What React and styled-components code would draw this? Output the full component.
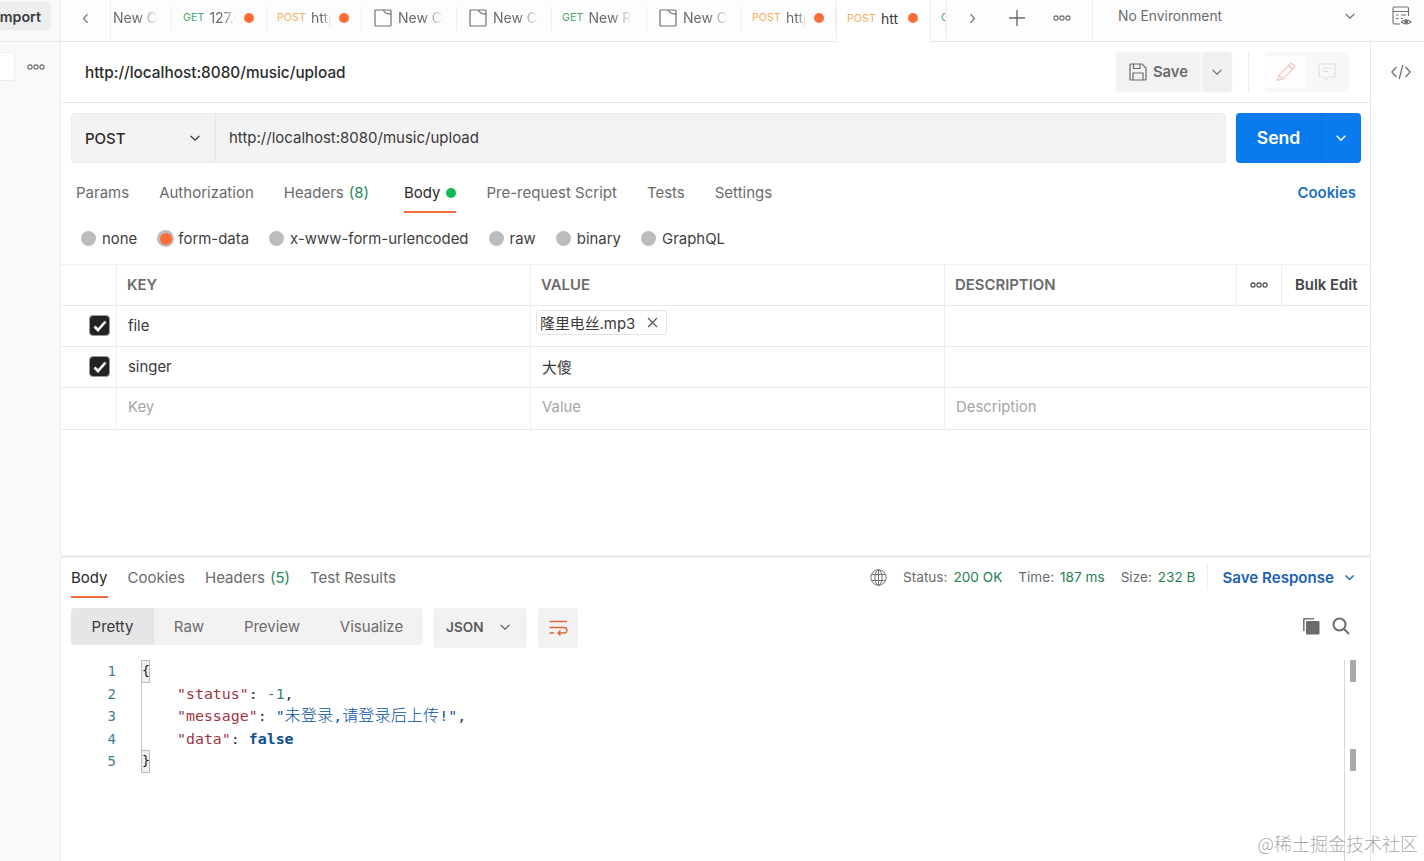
import React from "react";
import styled, { createGlobalStyle } from "styled-components";

const Global = createGlobalStyle`
  html, body { margin: 0; padding: 0; background: #fff; }
  body { width: 1424px; height: 861px; overflow: hidden; font-family: Inter, "Noto Sans CJK SC", sans-serif; color: #2b2b2b; font-size: 14.9px; }
  * { box-sizing: border-box; }
`;

const Page = styled.div`
  position: relative; width: 1424px; height: 861px; display: flex; flex-direction: column; overflow: hidden;
`;
const TopBar = styled.header`
  height: 42px; display: flex; border-bottom: 1px solid #e8e8e8; background: #fdfdfd; flex: none;
`;
const ImportCell = styled.div`
  width: 61px; flex: none; background: #f9f9f9; border-right: 1px solid #eee; padding-top: 2px; overflow: hidden;
`;
const ImportButton = styled.div`
  width: 51px; height: 28px; background: #eeeeee; border-radius: 0 4px 4px 0; font-size: 14.2px; font-weight: 600; color: #3c3c3c;
  display: flex; align-items: center; justify-content: flex-end; padding-right: 10px; overflow: hidden; white-space: nowrap;
`;
const NavCell = styled.div`
  width: ${p => p.$w}px; flex: none; display: flex; align-items: center; justify-content: center; color: #6b6b6b; padding-bottom: 5px;
  ${p => p.$border && "border-right: 1px solid #eee;"}
`;
const Tab = styled.div`
  width: ${p => p.$w || 95}px; flex: none; height: ${p => p.$active ? 42 : 41}px; display: flex; align-items: center;
  padding-left: ${p => p.$pad ?? 10}px; gap: 5px; font-size: 14px; white-space: nowrap; overflow: hidden; padding-bottom: 6px;
  background: ${p => p.$active ? "#fff" : "transparent"}; color: ${p => p.$active ? "#3a3a3a" : "#6b6b6b"};
  ${p => p.$active ? "border-left: 1px solid #eee; border-right: 1px solid #eee;" : ""}
  position: relative;
  &::after { content: ""; position: absolute; right: 0; top: 6px; bottom: 10px; width: 1px; background: ${p => p.$active ? "transparent" : "#f0f0f0"}; }
`;
const Method = styled.span`
  font-size: 10.6px; letter-spacing: 0.1px; flex: none; color: ${p => p.$m === "GET" ? "#47a86b" : "#f4ae5e"};
`;
const TabName = styled.span`
  display: block; width: ${p => p.$w}px; overflow: hidden; flex: none;
  ${p => p.$fade && "mask-image: linear-gradient(to right, #000 55%, transparent 100%); -webkit-mask-image: linear-gradient(to right, #000 55%, transparent 100%);"}
`;
const Dot = styled.span`
  width: 10px; height: 10px; border-radius: 50%; background: ${p => p.$c || "#ff6c37"}; flex: none; margin-left: ${p => p.$ml ?? 0}px; display: inline-block;
`;
const NavGroup = styled.div`
  width: 147px; flex: none; padding-left: 3px; display: flex; border-right: 1px solid #eee; border-left: 1px solid #eee;
`;
const EnvCell = styled.div`
  width: 277px; flex: none; padding: 0 13px 9px 25px; display: flex; align-items: center; justify-content: space-between; font-size: 13.8px; color: #6b6b6b;
`;
const EnvIcon = styled.div`
  flex: 1; display: flex; justify-content: center; align-items: center; padding: 0 0 9px 9px; color: #707070;
`;

const Body = styled.div`
  flex: 1; display: flex; min-height: 0;
`;
const Sidebar = styled.aside`
  width: 61px; flex: none; background: #f9f9f9; border-right: 1px solid #eee; padding-top: 10px; display: flex; justify-content: space-between;
`;
const SideInput = styled.div`
  width: 15px; height: 29px; background: #fff; border: 1px solid #efefef; border-left: 0; border-radius: 0 3px 3px 0;
`;
const SideDots = styled.div`
  width: 25px; padding-top: 12px; margin-right: 12px; color: #6b6b6b; display: flex; justify-content: center;
`;
const Main = styled.main`
  width: 1309px; flex: none; display: flex; flex-direction: column;
`;
const Rail = styled.aside`
  flex: 1; border-left: 1px solid #e8e8e8; display: flex; justify-content: center; padding: 22px 0 0 6px; color: #6b6b6b;
`;

const TitleRow = styled.div`
  height: 61px; flex: none; border-bottom: 1px solid #e8e8e8; display: flex; align-items: center; padding: 0 20px 0 24px;
`;
const Title = styled.div`
  font-size: 15.35px; font-weight: 500; color: #2b2b2b; flex: 1; padding-top: 1px;
`;
const SaveGroup = styled.div`
  display: flex; height: 40px; gap: 1px; box-shadow: 0 0 2px rgba(0,0,0,.04); border-radius: 4px; overflow: hidden;
`;
const SaveMain = styled.div`
  width: 85px; background: #f2f2f2; display: flex; align-items: center; gap: 6px; padding-left: 13px; color: #6b6b6b; font-weight: 600; font-size: 14.8px;
`;
const SaveArrow = styled.div`
  width: 30px; background: #f0f0f0; display: flex; align-items: center; justify-content: center; color: #6b6b6b;
`;
const VRule = styled.div`
  width: 1px; height: ${p => p.$h}px; background: #eee; margin: ${p => p.$m};
`;
const EditGroup = styled.div`
  width: 85px; height: 40px; background: #f8f8f8; border-radius: 4px; display: flex; padding: 4px 0 4px 0;
`;
const EditCell = styled.div`
  width: 41px; display: flex; align-items: center; justify-content: center; background: ${p => p.$on ? "#fdfdfd" : "transparent"}; border-radius: 3px; color: ${p => p.$c};
`;

const UrlRow = styled.div`
  display: flex; padding: 10px 9px 0 10px; gap: 10px; flex: none; height: 60px;
`;
const UrlBox = styled.div`
  flex: 1; height: 50px; display: flex; background: #f3f3f3; border: 1px solid #ececec; border-radius: 4px;
`;
const MethodSelect = styled.div`
  width: 144px; flex: none; border-right: 1px solid #e6e6e6; display: flex; align-items: center; justify-content: space-between; padding: 0 13px; font-weight: 500; font-size: 15px; color: #2b2b2b;
`;
const UrlText = styled.div`
  flex: 1; display: flex; align-items: center; padding: 0 0 2px 13px; font-size: 15px; color: #3a3a3a;
`;
const SendButton = styled.div`
  width: 125px; height: 50px; background: #097bed; border-radius: 4px; color: #fff; display: flex; flex: none;
`;
const SendLabel = styled.div`
  width: 86px; display: flex; align-items: center; justify-content: center; font-weight: 600; font-size: 17.6px; border-right: 1px solid #0b72da; padding-bottom: 2px;
`;
const SendArrow = styled.div`
  flex: 1; display: flex; align-items: center; justify-content: center; padding-right: 2px;
`;

const TabsRow = styled.div`
  display: flex; gap: ${p => p.$gap}px; height: ${p => p.$h}px; padding: ${p => p.$pad}; flex: none; align-items: stretch;
`;
const TabItem = styled.div`
  display: flex; align-items: center; gap: 5px; font-size: 15px; color: ${p => p.$active ? "#2b2b2b" : "#6b6b6b"}; white-space: nowrap;
  border-bottom: 2px solid ${p => p.$active ? "#f26b3a" : "transparent"}; padding-top: ${p => p.$pt ?? 0}px; margin-right: ${p => p.$mr || 0}px;
`;
const Count = styled.span`
  color: #1f8a58;
`;
const CookiesLink = styled.div`
  margin-left: auto; display: flex; align-items: center; color: #1a6fc4; font-weight: 600; font-size: 14.9px; padding-top: 10px;
`;

const RadioRow = styled.div`
  height: 51px; display: flex; align-items: center; gap: 20px; padding-left: 20px; flex: none;
`;
const RadioItem = styled.div`
  display: flex; align-items: center; gap: ${p => p.$on ? 4 : 6}px; font-size: 14.95px; color: #3f3f3f;
`;
const RadioMark = styled.span`
  width: ${p => p.$on ? 17 : 15}px; height: ${p => p.$on ? 17 : 15}px; border-radius: 50%; background: #bcbcbc; display: flex; align-items: center; justify-content: center; flex: none;
  &::after { content: ""; width: 12px; height: 12px; border-radius: 50%; background: ${p => p.$on ? "#ff6c37" : "transparent"}; }
`;

const Table = styled.div`
  border-top: 1px solid #eee; flex: none;
`;
const Row = styled.div`
  display: grid; grid-template-columns: 56px 414px 414px 292px 45px 88px; height: ${p => p.$h || 41}px; border-bottom: 1px solid #e9e9e9;
`;
const Cell = styled.div`
  display: flex; align-items: center; padding-left: ${p => p.$pl ?? 11}px; padding-bottom: ${p => p.$pb ?? 1}px; border-right: 1px solid ${p => p.$last ? "transparent" : "#eee"};
  grid-column: ${p => p.$span || "auto"}; font-size: 14.9px; font-weight: ${p => p.$w || 400};
  color: ${p => p.$c || "#3a3a3a"}; justify-content: ${p => p.$jc || "flex-start"}; white-space: nowrap;
`;
const Check = styled.span`
  width: 21px; height: 21px; border-radius: 4px; background: #232323; border: 1px solid #9a9a9a; margin-left: 28px; display: flex; align-items: center; justify-content: center;
`;
const FileChip = styled.span`
  height: 25px; display: inline-flex; align-items: center; gap: 12px; padding: 0 8px 0 3px; border: 1px solid #e2e2e2; border-radius: 4px; margin: -6px 0 0 -6px; color: #3a3a3a;
`;

const Request = styled.section`
  height: 516px; flex: none; display: flex; flex-direction: column; border-bottom: 3px solid #ededed;
`;
const Response = styled.section`
  flex: 1; display: flex; flex-direction: column; min-height: 0;
`;
const ResHead = styled.div`
  height: 40px; display: flex; justify-content: space-between; padding: 0 14px 0 10px; flex: none;
`;
const Stats = styled.div`
  display: flex; align-items: center; font-size: 13.6px; color: #6b6b6b; padding-bottom: 2px;
`;
const Stat = styled.span`
  margin-left: ${p => p.$ml}px; white-space: nowrap;
`;
const Green = styled.span`
  color: #1f7f4f; margin-left: 6px;
`;
const SaveResponse = styled.span`
  color: #1a62b5; font-weight: 600; font-size: 15.1px; display: flex; align-items: center; gap: 9px; margin-left: 15px;
`;
const Toolbar = styled.div`
  display: flex; align-items: flex-start; height: 52px; margin-top: 10px; padding: 0 20px 0 10px; flex: none;
`;
const Segment = styled.div`
  display: flex; height: 37px; width: 352px; background: #f2f2f2; border-radius: 4px; overflow: hidden;
`;
const SegItem = styled.div`
  width: ${p => p.$w}px; display: flex; align-items: center; justify-content: center; font-size: 15px; flex: none;
  background: ${p => p.$on ? "#e6e6e6" : "transparent"}; color: ${p => p.$on ? "#3a3a3a" : "#6b6b6b"};
`;
const JsonSelect = styled.div`
  width: 94px; height: 40px; margin-left: 10px; background: #f2f2f2; border-radius: 4px; display: flex; align-items: center; justify-content: space-between;
  padding: 0 15px 2px 13px; font-size: 13.6px; font-weight: 600; color: #5a5a5a;
`;
const WrapButton = styled.div`
  width: 40px; height: 40px; margin-left: 11px; background: #f2f2f2; border-radius: 4px; display: flex; align-items: center; justify-content: center;
`;
const ToolIcons = styled.div`
  margin-left: auto; display: flex; align-items: center; gap: 12px; height: 36px; color: #6b6b6b;
`;
const CodeArea = styled.div`
  flex: 1; display: flex; min-height: 0;
`;
const CodeBody = styled.div`
  flex: 1; display: flex; padding-left: 46px;
`;
const Gutter = styled.div`
  width: 34px; flex: none; font-family: "DejaVu Sans Mono", monospace; font-size: 14px; line-height: 22.5px; color: #3f7f95; margin-right: 0;
  > div { height: 22.5px; width: 9px; margin-left: 0; text-align: right; }
`;
const Code = styled.div`
  font-family: "DejaVu Sans Mono", "Noto Sans CJK SC", monospace; font-size: 14.9px; white-space: pre; color: #333; padding-top: 0;
`;
const CodeLine = styled.div`
  height: 22.5px; line-height: 22.5px; ${p => p.$guide && "box-shadow: inset 1px 0 0 #ccc;"} padding-left: ${p => p.$guide ? 36 : 0}px;
`;
const Bracket = styled.span`
  display: inline-block; width: 9px; height: 22.5px; line-height: 20px; background: #f0f0f0; border: 1px solid #bbb; text-align: center; font-size: 13px; color: #111; vertical-align: top; overflow: hidden;
`;
const Key = styled.span`color: #a1343f;`;
const Str = styled.span`color: #0451a5;`;
const Cjk = styled.span`font-family: "Noto Sans CJK SC", sans-serif; font-size: 16.2px; font-weight: 300; line-height: 1;`;
const Num = styled.span`color: #2f8a6b;`;
const Bool = styled.span`color: #0b4f8f; font-weight: 700;`;
const ScrollTrack = styled.div`
  width: 26px; flex: none; border-left: 1px solid #d8d8d8; padding-left: 5px; display: flex; flex-direction: column;
`;
const ScrollBar = styled.div`
  width: 6px; height: 22px; background: #a8a8a8; margin-top: ${p => p.$mt}px;
`;
const Watermark = styled.div`
  position: absolute; right: 6px; bottom: 6px; font-family: "Noto Sans CJK SC", sans-serif; font-size: 18px; font-weight: 300; line-height: 24px; color: rgba(110,110,110,.62); white-space: nowrap;
`;

const Chevron = ({ dir = "down", s = 14, w = 1.4 }) => {
  const d = { down: "M3 5.5 L8 10.5 L13 5.5", left: "M10.5 2.5 L5.5 8 L10.5 13.5", right: "M5.5 2.5 L10.5 8 L5.5 13.5" }[dir];
  return <svg width={s} height={s} viewBox="0 0 16 16" fill="none" stroke="currentColor" strokeWidth={w}><path d={d} /></svg>;
};
const Dots = () => (
  <svg width="18" height="6" viewBox="0 0 18 6" fill="none" stroke="currentColor" strokeWidth="1.1">
    <circle cx="3" cy="3" r="2.1" /><circle cx="9" cy="3" r="2.1" /><circle cx="15" cy="3" r="2.1" />
  </svg>
);
const DocIcon = () => (
  <svg width="18" height="18" viewBox="0 0 18 18" fill="none" stroke="#6f6f6f" strokeWidth="1.2" style={{ flex: "none", marginRight: 1 }}>
    <path d="M2 1 H16 Q17 1 17 2 V16 Q17 17 16 17 H2 Q1 17 1 16 V2 Q1 1 2 1 Z" />
    <path d="M9.5 1 Q10 4.5 17 5.2" />
  </svg>
);
const PlusIcon = () => (
  <svg width="18" height="18" viewBox="0 0 18 18" stroke="currentColor" strokeWidth="1.4"><path d="M9 1 V17 M1 9 H17" /></svg>
);
const EnvSvg = () => (
  <svg width="20" height="20" viewBox="0 0 20 20" fill="none" stroke="currentColor" strokeWidth="1.1">
    <path d="M8 18 H2.5 Q1 18 1 16.5 V2.5 Q1 1 2.5 1 H15 Q16.5 1 16.5 2.5 V10" />
    <path d="M1 5.5 H16.5 M4 9 H6.5 M9 9 H14 M4 12.5 H6.5 M9 12.5 H11" />
    <path d="M9.5 16 Q14 11.5 19 16 Q14 20 9.5 16 Z" />
    <circle cx="14.2" cy="15.8" r="1.4" fill="currentColor" />
  </svg>
);
const SaveSvg = () => (
  <svg width="18" height="18" viewBox="0 0 18 18" fill="none" stroke="#6b6b6b" strokeWidth="1.2">
    <path d="M2 1 H13 L17 5 V16 Q17 17 16 17 H2 Q1 17 1 16 V2 Q1 1 2 1 Z" />
    <path d="M4.5 1 V5.5 H11 V1 M4 17 V10 H14 V17" />
  </svg>
);
const PencilSvg = () => (
  <svg width="20" height="20" viewBox="0 0 20 20" fill="none" stroke="currentColor" strokeWidth="1.1">
    <path d="M1.5 18.5 L3 13 L14.5 1.5 Q15.5 1 16.5 1.8 L18.2 3.5 Q19 4.5 18.5 5.5 L7 17 Z M3 13 L7 17 M12.5 3.5 L16.5 7.5" />
  </svg>
);
const CommentSvg = () => (
  <svg width="18" height="18" viewBox="0 0 18 18" fill="none" stroke="currentColor" strokeWidth="1.1">
    <path d="M1 1 H17 V14 H10 L8 16.5 L6 14 H1 Z M4.5 5 H13.5 M4.5 8.5 H10.5" />
  </svg>
);
const CodeSvg = () => (
  <svg width="20" height="16" viewBox="0 0 20 16" fill="none" stroke="currentColor" strokeWidth="1.2">
    <path d="M5.5 3 L0.8 8 L5.5 13 M14.5 3 L19.2 8 L14.5 13 M11.8 1 L8.2 15" />
  </svg>
);
const GlobeSvg = () => (
  <svg width="17" height="17" viewBox="0 0 17 17" fill="none" stroke="#6f6f6f" strokeWidth="1">
    <circle cx="8.5" cy="8.5" r="7.7" /><ellipse cx="8.5" cy="8.5" rx="3.6" ry="7.7" />
    <path d="M1.5 5.5 H15.5 M1.5 11.5 H15.5 M8.5 .8 V16.2" />
  </svg>
);
const CopySvg = () => (
  <svg width="18" height="18" viewBox="0 0 18 18">
    <path d="M1 2 Q1 1 2 1 H12 V2.5 H2.6 V14 H1 Z" fill="#777" />
    <rect x="4" y="4" width="13.5" height="13.5" rx="1" fill="#6b6b6b" />
  </svg>
);
const SearchSvg = () => (
  <svg width="18" height="18" viewBox="0 0 18 18" fill="none" stroke="#6b6b6b" strokeWidth="2">
    <circle cx="7.5" cy="7.5" r="6" /><path d="M12 12 L17 17" />
  </svg>
);
const WrapSvg = () => (
  <svg width="19" height="16" viewBox="0 0 19 16" fill="none" stroke="#e2673a" strokeWidth="1.3">
    <path d="M0.5 1.5 H18 M0.5 7.5 H15 Q18 7.5 18 10.2 Q18 13 15 13 H9 M11.5 10.5 L9 13 L11.5 15.5 M0.5 13 H5" />
  </svg>
);
const CheckMark = () => (
  <svg width="14" height="12" viewBox="0 0 14 12" fill="none" stroke="#fff" strokeWidth="2.6"><path d="M1.5 6.5 L5 10 L12.5 1.5" /></svg>
);
const CloseSvg = () => (
  <svg width="11" height="11" viewBox="0 0 11 11" stroke="#555" strokeWidth="1.2"><path d="M1 1 L10 10 M10 1 L1 10" /></svg>
);

const radios = ["none", "form-data", "x-www-form-urlencoded", "raw", "binary", "GraphQL"];

export default function App() {
  return (
    <Page>
      <Global />
      <TopBar>
        <ImportCell><ImportButton>mport</ImportButton></ImportCell>
        <NavCell $w={50} $border><Chevron dir="left" s={13} /></NavCell>
        <Tab $w={61} $pad={2}><TabName $w={46} $fade>New Collection</TabName></Tab>
        <Tab $pad={11}><Method $m="GET">GET</Method><TabName $w={27} $fade>127.0.0.1</TabName><Dot $ml={3} /></Tab>
        <Tab><Method $m="POST">POST</Method><TabName $w={20} $fade>http</TabName><Dot $ml={3} /></Tab>
        <Tab $pad={12}><DocIcon /><TabName $w={46} $fade>New Collection</TabName></Tab>
        <Tab $pad={12}><DocIcon /><TabName $w={46} $fade>New Collection</TabName></Tab>
        <Tab><Method $m="GET">GET</Method><TabName $w={44} $fade>New Request</TabName></Tab>
        <Tab $pad={12}><DocIcon /><TabName $w={46} $fade>New Collection</TabName></Tab>
        <Tab $w={94}><Method $m="POST">POST</Method><TabName $w={20} $fade>http</TabName><Dot $ml={3} /></Tab>
        <Tab $active><Method $m="POST">POST</Method><TabName $w={19}>htt</TabName><Dot $ml={3} /></Tab>
        <Tab $w={15} $pad={10}><Method $m="GET">G</Method></Tab>
        <NavGroup>
          <NavCell $w={44}><Chevron dir="right" s={13} /></NavCell>
          <NavCell $w={45}><PlusIcon /></NavCell>
          <NavCell $w={45}><Dots /></NavCell>
        </NavGroup>
        <EnvCell>No Environment<Chevron s={14} /></EnvCell>
        <EnvIcon><EnvSvg /></EnvIcon>
      </TopBar>
      <Body>
        <Sidebar><SideInput /><SideDots><Dots /></SideDots></Sidebar>
        <Main>
          <Request>
            <TitleRow>
              <Title>http://localhost:8080/music/upload</Title>
              <SaveGroup>
                <SaveMain><SaveSvg />Save</SaveMain>
                <SaveArrow><Chevron s={14} /></SaveArrow>
              </SaveGroup>
              <VRule $h={40} $m="0 16px" />
              <EditGroup>
                <EditCell $on $c="#f5c4bb"><PencilSvg /></EditCell>
                <EditCell $c="#dfdfdf"><CommentSvg /></EditCell>
              </EditGroup>
            </TitleRow>
            <UrlRow>
              <UrlBox>
                <MethodSelect>POST<Chevron s={14} /></MethodSelect>
                <UrlText>http://localhost:8080/music/upload</UrlText>
              </UrlBox>
              <SendButton>
                <SendLabel>Send</SendLabel>
                <SendArrow><Chevron s={14} w={1.6} /></SendArrow>
              </SendButton>
            </UrlRow>
            <TabsRow $gap={30} $h={50} $pad="0 14px 0 15px">
              <TabItem $pt={11}>Params</TabItem>
              <TabItem $pt={11}>Authorization</TabItem>
              <TabItem $pt={11} $mr={5}>Headers <Count>(8)</Count></TabItem>
              <TabItem $pt={11} $active>Body <Dot $c="#0cbb52" $ml={1} /></TabItem>
              <TabItem $pt={11}>Pre-request Script</TabItem>
              <TabItem $pt={11}>Tests</TabItem>
              <TabItem $pt={11}>Settings</TabItem>
              <CookiesLink>Cookies</CookiesLink>
            </TabsRow>
            <RadioRow>
              {radios.map((r, i) => (
                <RadioItem key={r} $on={i === 1}><RadioMark $on={i === 1} />{r}</RadioItem>
              ))}
            </RadioRow>
            <Table>
              <Row>
                <Cell />
                <Cell $w={600} $c="#6b6b6b" $pl={10}>KEY</Cell>
                <Cell $w={600} $c="#6b6b6b" $pl={10}>VALUE</Cell>
                <Cell $w={600} $c="#6b6b6b" $pl={10}>DESCRIPTION</Cell>
                <Cell $pl={0} $jc="center" $c="#444"><Dots /></Cell>
                <Cell $last $w={600} $c="#444" $pl={13}>Bulk Edit</Cell>
              </Row>
              <Row>
                <Cell $pl={0}><Check><CheckMark /></Check></Cell>
                <Cell>file</Cell>
                <Cell><FileChip>隆里电丝.mp3<CloseSvg /></FileChip></Cell>
                <Cell $span="4 / 7" $last />
              </Row>
              <Row>
                <Cell $pl={0}><Check><CheckMark /></Check></Cell>
                <Cell>singer</Cell>
                <Cell>大傻</Cell>
                <Cell $span="4 / 7" $last />
              </Row>
              <Row $h={42}>
                <Cell />
                <Cell $pb={3} $c="#a6a6a6">Key</Cell>
                <Cell $pb={3} $c="#a6a6a6">Value</Cell>
                <Cell $pb={3} $span="4 / 7" $last $c="#a6a6a6" $pl={11}>Description</Cell>
              </Row>
            </Table>
          </Request>
          <Response>
            <ResHead>
              <TabsRow $gap={20} $h={40} $pad="0">
                <TabItem $active>Body</TabItem>
                <TabItem>Cookies</TabItem>
                <TabItem>Headers <Count>(5)</Count></TabItem>
                <TabItem>Test Results</TabItem>
              </TabsRow>
              <Stats>
                <GlobeSvg />
                <Stat $ml={16}>Status:<Green>200 OK</Green></Stat>
                <Stat $ml={16}>Time:<Green>187 ms</Green></Stat>
                <Stat $ml={16}>Size:<Green>232 B</Green></Stat>
                <VRule $h={26} $m="0 0 0 11px" />
                <SaveResponse>Save Response<Chevron s={13} w={1.6} /></SaveResponse>
              </Stats>
            </ResHead>
            <Toolbar>
              <Segment>
                <SegItem $w={83} $on>Pretty</SegItem>
                <SegItem $w={70}>Raw</SegItem>
                <SegItem $w={96}>Preview</SegItem>
                <SegItem $w={103}>Visualize</SegItem>
              </Segment>
              <JsonSelect>JSON<Chevron s={14} /></JsonSelect>
              <WrapButton><WrapSvg /></WrapButton>
              <ToolIcons><CopySvg /><SearchSvg /></ToolIcons>
            </Toolbar>
            <CodeArea>
              <CodeBody>
                <Gutter>{[1, 2, 3, 4, 5].map(n => <div key={n}>{n}</div>)}</Gutter>
                <Code>
                  <CodeLine><Bracket>{"{"}</Bracket></CodeLine>
                  <CodeLine $guide><Key>"status"</Key>: <Num>-1</Num>,</CodeLine>
                  <CodeLine $guide><Key>"message"</Key>: <Str>"<Cjk>未登录</Cjk>,<Cjk>请登录后上传</Cjk>!"</Str>,</CodeLine>
                  <CodeLine $guide><Key>"data"</Key>: <Bool>false</Bool></CodeLine>
                  <CodeLine><Bracket>{"}"}</Bracket></CodeLine>
                </Code>
              </CodeBody>
              <ScrollTrack>
                <ScrollBar $mt={0} />
                <ScrollBar $mt={67} />
              </ScrollTrack>
            </CodeArea>
          </Response>
        </Main>
        <Rail><CodeSvg /></Rail>
      </Body>
      <Watermark>@稀土掘金技术社区</Watermark>
    </Page>
  );
}
